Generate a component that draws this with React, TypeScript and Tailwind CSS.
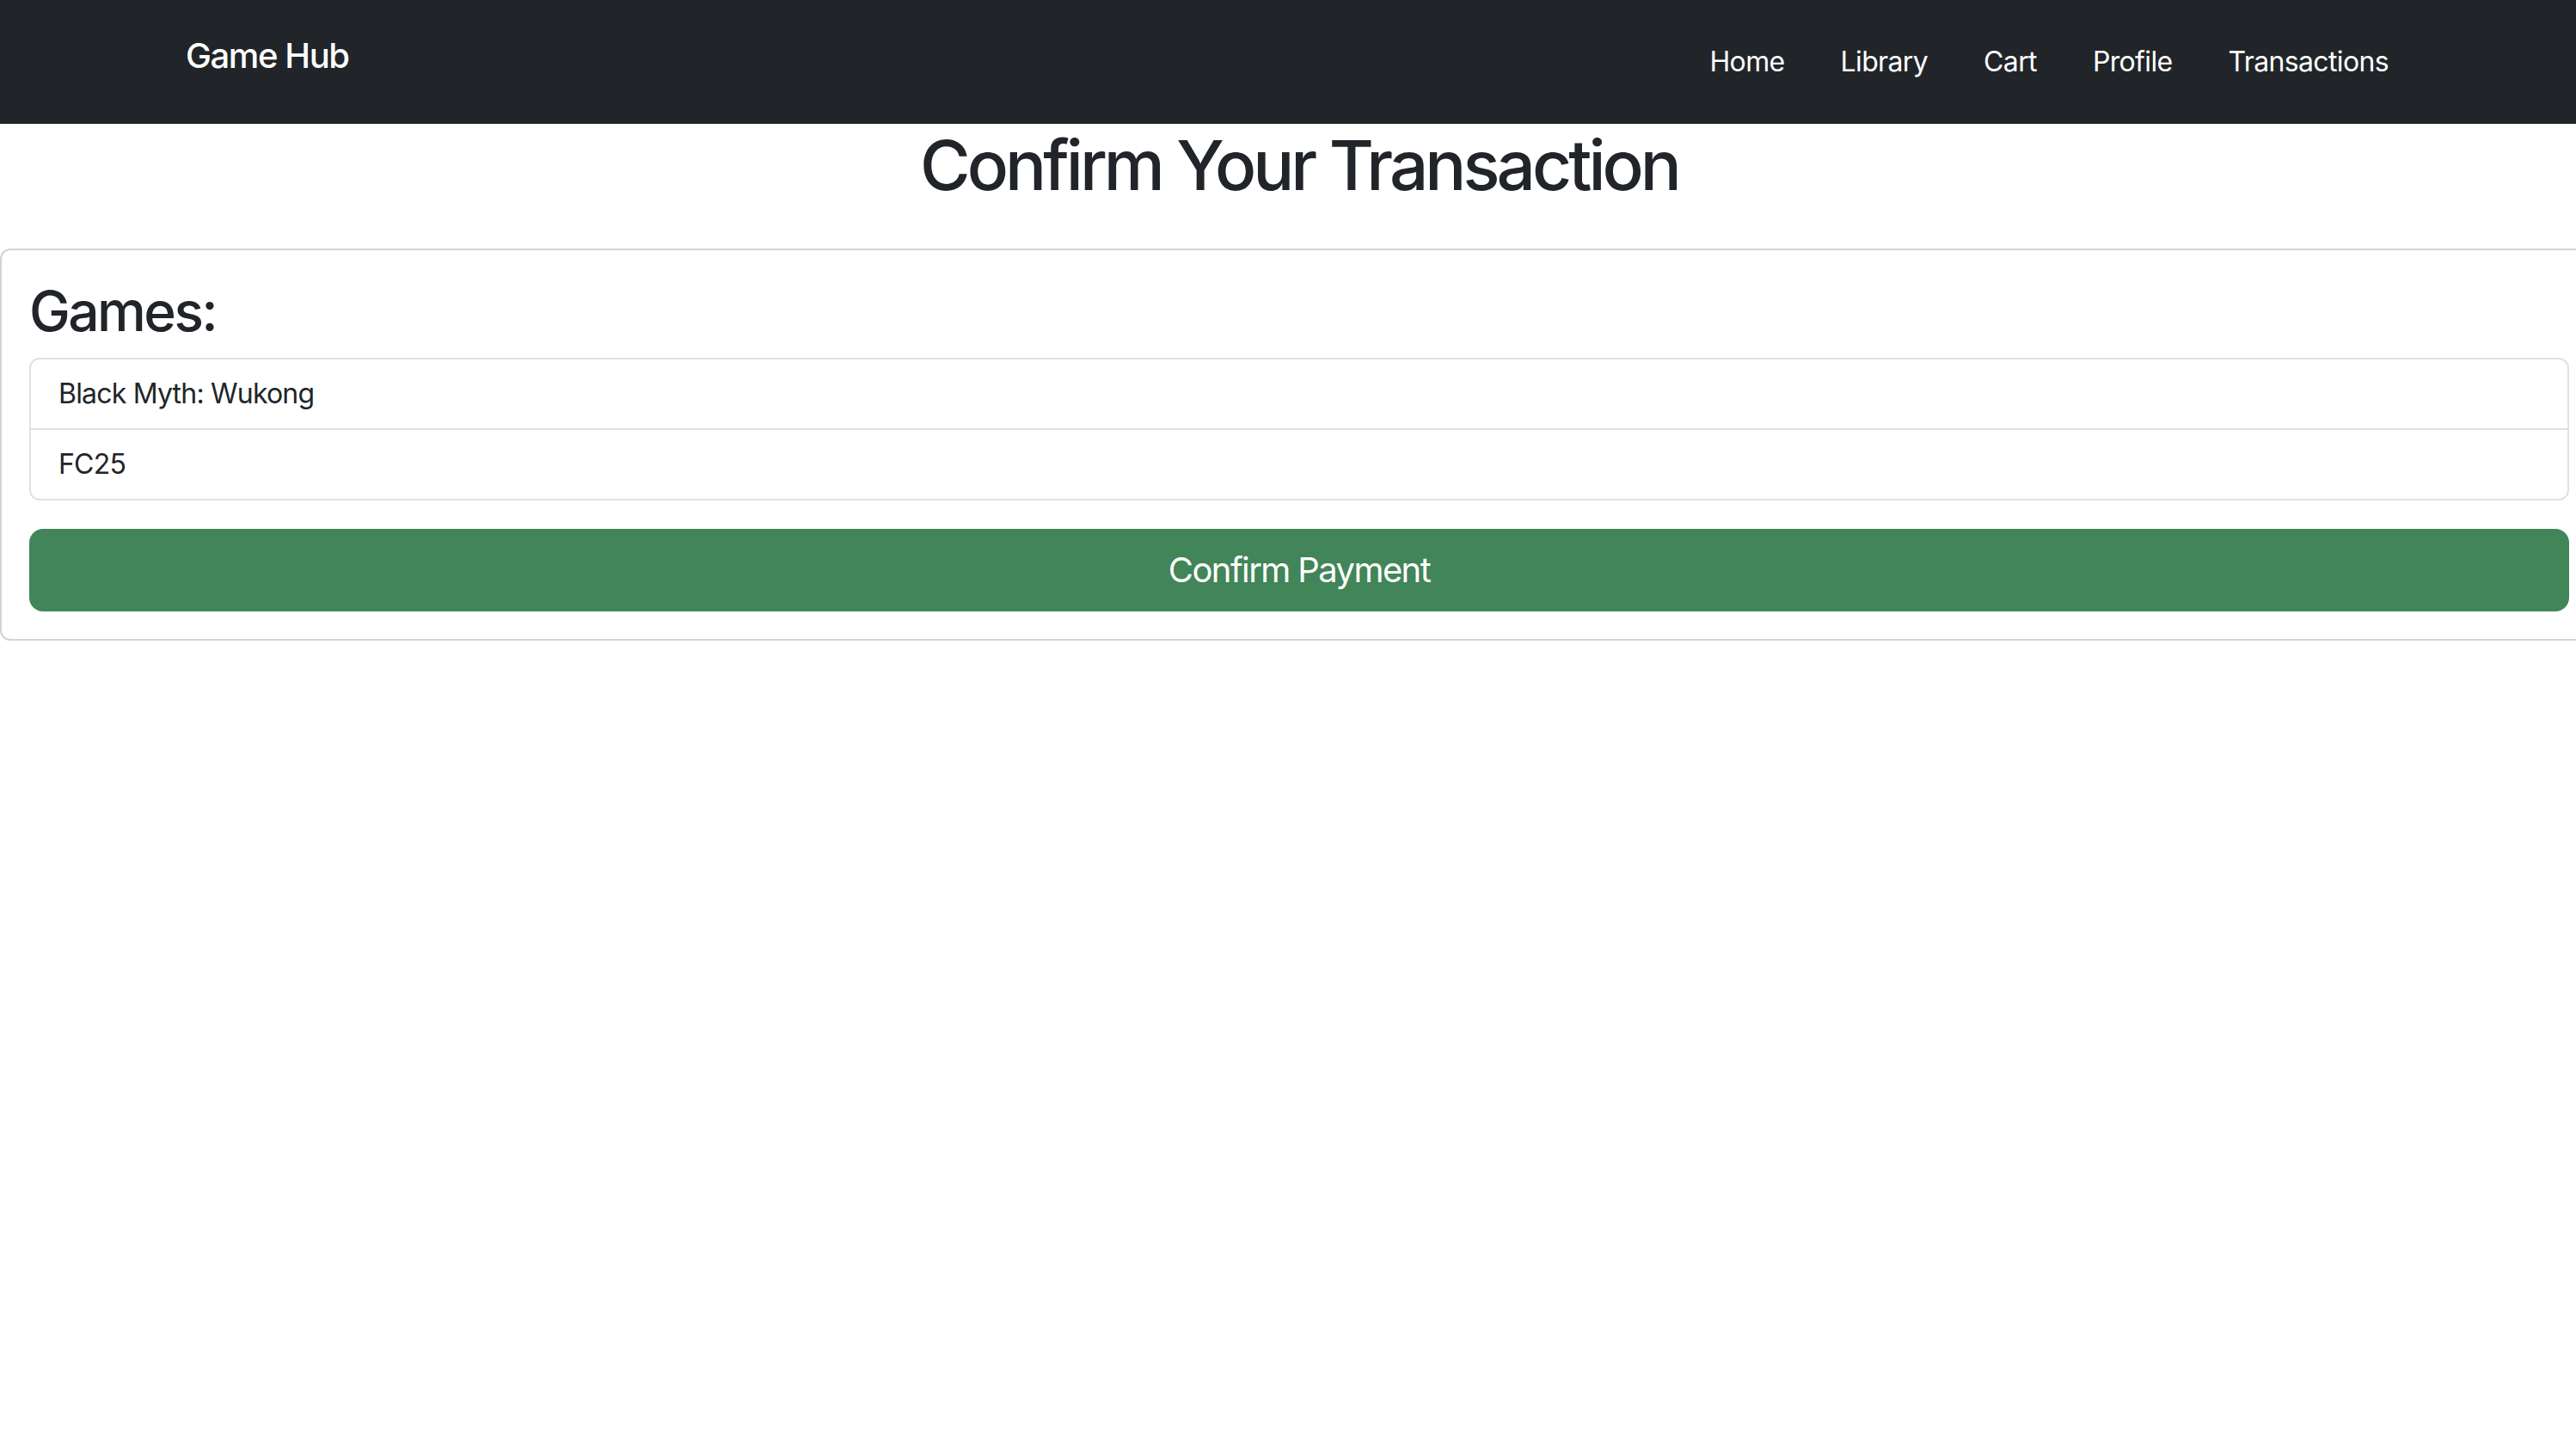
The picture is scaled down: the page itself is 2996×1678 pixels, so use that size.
import React from 'react';

const games = ['Black Myth: Wukong', 'FC25'];
const links = ['Home', 'Library', 'Cart', 'Profile', 'Transactions'];

export default function App() {
  return (
    <div className="min-h-screen overflow-x-hidden bg-white text-[#212529] font-['Inter',sans-serif]">
      {/* Navbar */}
      <nav className="h-[144px] bg-[#212529]">
        <div className="mx-auto flex max-w-[2640px] items-start justify-between px-[24px]">
          <a className="ml-[14px] pt-[35px] text-[40px] leading-[60px] font-medium tracking-[-0.035em] text-white">
            Game Hub
          </a>
          <ul className="flex gap-[33px] pt-[48px]">
            {links.map((l) => (
              <li key={l}>
                <a className="px-[16px] text-[32px] leading-[48px] tracking-[-0.02em] text-white">{l}</a>
              </li>
            ))}
          </ul>
        </div>
      </nav>

      {/* Title */}
      <h1 className="mb-[49px] pl-[26px] text-center text-[80px] leading-[96px] font-medium tracking-[-0.05em]">
        Confirm Your Transaction
      </h1>

      <div className="rounded-l-[12px] border-[2px] border-r-0 border-[#d3d3d3] py-[32px] pl-[32px] pr-[8px]">
        <h2 className="mb-[16px] text-[64px] leading-[77px] font-medium tracking-[-0.04em]">Games:</h2>
        <ul className="rounded-[12px] border-[2px] border-[#dee2e6]">
          {games.map((g, i) => (
            <li
              key={g}
              className={`px-[32px] py-[16px] text-[32px] leading-[48px] tracking-[-0.025em] ${i > 0 ? 'border-t-[2px] border-[#dee2e6]' : ''}`}
            >
              {g}
            </li>
          ))}
        </ul>
        <button className="mt-[33px] h-[96px] w-full rounded-[16px] bg-[#418558] text-[40px] leading-[60px] tracking-[-0.04em] text-white">
          Confirm Payment
        </button>
      </div>
    </div>
  );
}
